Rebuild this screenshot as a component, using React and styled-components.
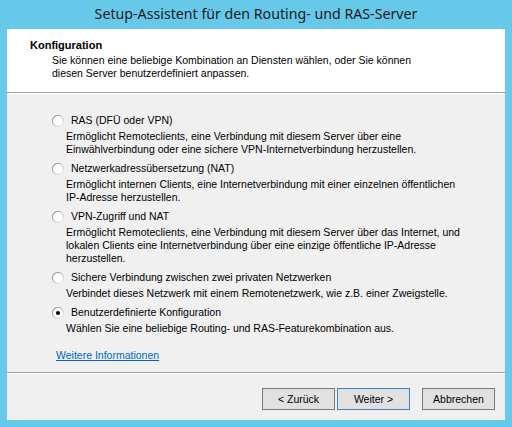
import React from "react";
import styled, { createGlobalStyle } from "styled-components";

const Global = createGlobalStyle`
  html, body { margin: 0; padding: 0; }
  body { width: 512px; height: 427px; overflow: hidden; background: #66c9ea; }
`;

const Window = styled.div`
  width: 512px;
  height: 427px;
  box-sizing: border-box;
  background: #66c9ea;
  padding: 0 7px 7px 7px;
  display: flex;
  flex-direction: column;
`;

const TitleBar = styled.div`
  height: 29px;
  display: flex;
  align-items: center;
  justify-content: center;
  font-family: "Noto Sans", "Open Sans", sans-serif;
  font-size: 14.2px;
  color: #1a1a1a;
  padding-bottom: 3px;
  box-sizing: border-box;
`;

const Client = styled.div`
  flex: 1;
  background: #f0f0f0;
  display: flex;
  flex-direction: column;
  font-family: "Liberation Sans", Arial, sans-serif;
  font-size: 10.5px;
  line-height: 13px;
  color: #000;
`;

const Header = styled.div`
  height: 63px;
  box-sizing: border-box;
  background: #fff;
  padding: 10px 0 0 23px;
`;

const HeaderTitle = styled.div`
  font-weight: bold;
  font-size: 11px;
`;

const Lines = styled.div`
  white-space: nowrap;
  margin: ${(p) => p.$margin};
`;

const Etched = styled.div`
  height: 0;
  border-top: 1px solid #a0a0a0;
  border-bottom: 1px solid #fff;
`;

const Body = styled.div`
  flex: 1;
  padding: 20px 0 0 45px;
  display: flex;
  flex-direction: column;
`;

const Option = styled.div`
  display: flex;
  flex-direction: column;
  margin-bottom: 6px;
`;

const OptionLabel = styled.label`
  display: flex;
  align-items: center;
  gap: 7px;
  height: 13px;
  white-space: nowrap;
`;

const Link = styled.a`
  margin: 8px 0 0 4px;
  color: #0066cc;
  text-decoration: underline;
  align-self: flex-start;
`;

const Footer = styled.div`
  height: 46px;
  box-sizing: border-box;
  display: flex;
  align-items: flex-start;
  padding: 14px 10px 0 0;
  justify-content: flex-end;
`;

const Button = styled.button`
  width: 73px;
  height: 22px;
  box-sizing: border-box;
  margin-left: ${(p) => p.$gap || 2}px;
  background: #e1e1e1;
  border: 1px solid ${(p) => (p.$default ? "#3c86c6" : "#7a7a7a")};
  font-family: "Liberation Sans", Arial, sans-serif;
  font-size: 10.5px;
  color: #000;
  padding: 0;
  display: flex;
  align-items: center;
  justify-content: center;
`;

const Radio = ({ checked }) => (
  <svg width="12" height="12" viewBox="0 0 12 12">
    <defs>
      <linearGradient id="rg" x1="0" y1="0" x2="1" y2="1">
        <stop offset="0" stopColor="#8a8a8a" />
        <stop offset="0.55" stopColor="#c8c8c8" />
        <stop offset="1" stopColor="#f4f4f4" />
      </linearGradient>
    </defs>
    <circle cx="6" cy="6" r="5.5" fill="#fff" stroke="url(#rg)" strokeWidth="1.2" />
    {checked && <circle cx="6" cy="6" r="2" fill="#000" />}
  </svg>
);

const options = [
  {
    label: "RAS (DFÜ oder VPN)",
    desc: [
      "Ermöglicht Remoteclients, eine Verbindung mit diesem Server über eine",
      "Einwählverbindung oder eine sichere VPN-Internetverbindung herzustellen.",
    ],
  },
  {
    label: "Netzwerkadressübersetzung (NAT)",
    desc: [
      "Ermöglicht internen Clients, eine Internetverbindung mit einer einzelnen öffentlichen",
      "IP-Adresse herzustellen.",
    ],
  },
  {
    label: "VPN-Zugriff und NAT",
    desc: [
      "Ermöglicht Remoteclients, eine Verbindung mit diesem Server über das Internet, und",
      "lokalen Clients eine Internetverbindung über eine einzige öffentliche IP-Adresse",
      "herzustellen.",
    ],
  },
  {
    label: "Sichere Verbindung zwischen zwei privaten Netzwerken",
    desc: ["Verbindet dieses Netzwerk mit einem Remotenetzwerk, wie z.B. einer Zweigstelle."],
  },
  {
    label: "Benutzerdefinierte Konfiguration",
    desc: ["Wählen Sie eine beliebige Routing- und RAS-Featurekombination aus."],
    checked: true,
  },
];

export default function App() {
  return (
    <Window>
      <Global />
      <TitleBar>Setup-Assistent für den Routing- und RAS-Server</TitleBar>
      <Client>
        <Header>
          <HeaderTitle>Konfiguration</HeaderTitle>
          <Lines $margin="2px 0 0 22px">
            Sie können eine beliebige Kombination an Diensten wählen, oder Sie können
            <br />
            diesen Server benutzerdefiniert anpassen.
          </Lines>
        </Header>
        <Etched />
        <Body>
          {options.map((o) => (
            <Option key={o.label}>
              <OptionLabel>
                <Radio checked={o.checked} />
                <span>{o.label}</span>
              </OptionLabel>
              <Lines $margin="3px 0 0 14px">
                {o.desc.map((l, i) => (
                  <div key={i}>{l}</div>
                ))}
              </Lines>
            </Option>
          ))}
          <Link href="#">Weitere Informationen</Link>
        </Body>
        <Etched />
        <Footer>
          <Button>&lt; Zurück</Button>
          <Button $default>Weiter &gt;</Button>
          <Button $gap={12}>Abbrechen</Button>
        </Footer>
      </Client>
    </Window>
  );
}
